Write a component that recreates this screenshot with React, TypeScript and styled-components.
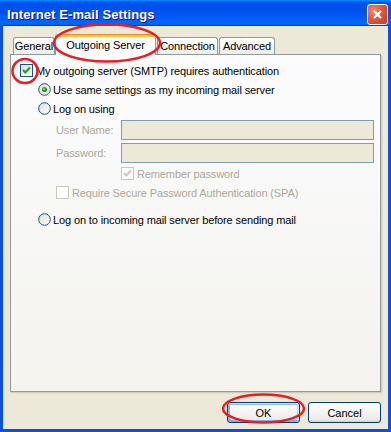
import styled, { createGlobalStyle } from "styled-components";

const GlobalStyle = createGlobalStyle`
  html, body {
    margin: 0;
    padding: 0;
    background: #ffffff;
  }
  body {
    font-family: "Liberation Sans", Arial, sans-serif;
    font-size: 11px;
  }
`;

const Window = styled.div`
  position: relative;
  width: 391px;
  height: 432px;
  display: flex;
  flex-direction: column;
  overflow: hidden;
`;

const TitleBar = styled.div`
  height: 26px;
  box-sizing: border-box;
  padding: 3px 3px 0 7px;
  display: flex;
  align-items: center;
  justify-content: space-between;
  background: linear-gradient(
    180deg,
    #0997ff,
    #0053ee 8%,
    #0050ee 40%,
    #06f 88%,
    #06f 93%,
    #005bff 95%,
    #003dd7 96%,
    #003dd7
  );
`;

const Title = styled.span`
  font-family: "Liberation Sans", Arial, sans-serif;
  font-weight: 700;
  font-size: 13px;
  color: #ffffff;
  text-shadow: 1px 1px #0f1089;
  letter-spacing: 0.1px;
`;

const CloseButton = styled.div`
  width: 21px;
  height: 21px;
  box-sizing: border-box;
  border: 1px solid #ffffff;
  border-radius: 3px;
  background: radial-gradient(
    circle at 30% 30%,
    #f08a6a 0%,
    #e2583b 45%,
    #c83a1c 100%
  );
  display: flex;
  align-items: center;
  justify-content: center;
`;

const Frame = styled.div`
  flex: 1;
  display: flex;
  flex-direction: column;
  box-sizing: border-box;
  border: 3px solid #0b4fe3;
  border-top: none;
  background: #ece9d8;
  padding: 8px 7px 6px 7px;
`;

const TabStrip = styled.div`
  height: 20px;
  display: flex;
  align-items: flex-end;
  padding-left: 3px;
  position: relative;
  z-index: 1;
`;

const Tab = styled.div<{ $w: number; $active?: boolean; $gap?: number }>`
  width: ${(p) => p.$w}px;
  margin-left: ${(p) => p.$gap ?? 0}px;
  height: ${(p) => (p.$active ? 21 : 17)}px;
  margin-bottom: ${(p) => (p.$active ? -1 : 0)}px;
  box-sizing: border-box;
  border: 1px solid #919b9c;
  border-bottom: none;
  border-top-color: ${(p) => (p.$active ? "#e68b2c" : "#919b9c")};
  border-radius: 3px 3px 0 0;
  display: flex;
  align-items: center;
  justify-content: center;
  padding-bottom: ${(p) => (p.$active ? 1 : 0)}px;
  color: #000000;
  letter-spacing: -0.1px;
  background: ${(p) =>
    p.$active
      ? "#fcfcfe"
      : "linear-gradient(180deg, #fff, #fafaf9 26%, #f0f0ea 95%, #ecebe5)"};
  box-shadow: ${(p) => (p.$active ? "inset 0 2px #ffc83c" : "none")};
`;

const Panel = styled.div`
  flex: 1;
  box-sizing: border-box;
  border: 1px solid #919b9c;
  background: linear-gradient(180deg, #fcfcfe, #f4f3ee);
  box-shadow: 1px 1px #d0cebf, 2px 2px #e3e0d0;
  padding: 6px 0 0 9px;
  display: flex;
  flex-direction: column;
`;

const Row = styled.div<{ $indent?: number; $top?: number }>`
  height: 19px;
  display: flex;
  align-items: center;
  padding-left: ${(p) => p.$indent ?? 0}px;
  margin-top: ${(p) => p.$top ?? 0}px;
`;

const Label = styled.span<{ $disabled?: boolean; $gap?: number }>`
  margin-left: ${(p) => p.$gap ?? 3}px;
  color: ${(p) => (p.$disabled ? "#aca899" : "#000000")};
  letter-spacing: -0.12px;
  white-space: nowrap;
`;

const FieldRow = styled.div<{ $top: number }>`
  display: flex;
  align-items: center;
  padding-left: 36px;
  margin-top: ${(p) => p.$top}px;
`;

const FieldLabel = styled.span`
  width: 65px;
  color: #aca899;
  letter-spacing: -0.12px;
`;

const TextBox = styled.div`
  width: 253px;
  height: 20px;
  box-sizing: border-box;
  border: 1px solid #7f9db9;
  background: #ece9d8;
`;

const BoxMark = styled.span<{ $disabled?: boolean }>`
  width: 13px;
  height: 13px;
  flex: none;
  box-sizing: border-box;
  border: 1px solid ${(p) => (p.$disabled ? "#cac8bb" : "#1c5180")};
  background: ${(p) =>
    p.$disabled ? "#ffffff" : "linear-gradient(135deg, #dcdcd7, #ffffff)"};
  display: flex;
  align-items: center;
  justify-content: center;
`;

const ButtonRow = styled.div`
  display: flex;
  justify-content: flex-end;
  gap: 8px;
  margin-top: 10px;
`;

const Button = styled.button<{ $default?: boolean }>`
  width: 73px;
  height: 21px;
  box-sizing: border-box;
  border: 1px solid #003c74;
  border-radius: 3px;
  padding: 0;
  font-family: "Liberation Sans", Arial, sans-serif;
  font-size: 11px;
  color: #000000;
  background: linear-gradient(180deg, #fff, #ecebe6 86%, #d6d0c5);
  box-shadow: ${(p) =>
    p.$default
      ? "inset -1px 1px #cee7ff, inset 1px 2px #98b8ea, inset -2px 2px #bcd4f6, inset 1px -1px #89ade4, inset 2px -2px #89ade4"
      : "none"};
`;

const Overlay = styled.svg`
  position: absolute;
  left: 0;
  top: 0;
  pointer-events: none;
  z-index: 5;
`;

function CheckBox({ checked, disabled }: { checked?: boolean; disabled?: boolean }) {
  return (
    <BoxMark $disabled={disabled}>
      {checked && (
        <svg width="11" height="11" viewBox="0 0 11 11">
          <polyline
            points="2,5 4.3,7.4 9,2.6"
            fill="none"
            stroke={disabled ? "#cac8bb" : "#21a121"}
            strokeWidth="2.2"
          />
        </svg>
      )}
    </BoxMark>
  );
}

function Radio({ checked }: { checked?: boolean }) {
  return (
    <svg width="13" height="13" viewBox="0 0 13 13" style={{ flex: "none" }}>
      <defs>
        <linearGradient id="rfill" x1="0" y1="0" x2="1" y2="1">
          <stop offset="0" stopColor="#dcdcd7" />
          <stop offset="1" stopColor="#ffffff" />
        </linearGradient>
      </defs>
      <circle cx="6.5" cy="6.5" r="5.8" fill="url(#rfill)" stroke="#1c5180" strokeWidth="1" />
      {checked && <circle cx="6.5" cy="6.5" r="2.6" fill="#21a121" />}
      {checked && <circle cx="6" cy="6" r="1" fill="#8ee08e" />}
    </svg>
  );
}

export default function App() {
  return (
    <>
      <GlobalStyle />
      <Window>
        <TitleBar>
          <Title>Internet E-mail Settings</Title>
          <CloseButton>
            <svg width="11" height="11" viewBox="0 0 11 11">
              <path d="M2 2 L9 9 M9 2 L2 9" stroke="#ffffff" strokeWidth="2.2" />
            </svg>
          </CloseButton>
        </TitleBar>
        <Frame>
          <TabStrip>
            <Tab $w={42}>General</Tab>
            <Tab $w={101} $active>
              Outgoing Server
            </Tab>
            <Tab $w={61} $gap={1}>
              Connection
            </Tab>
            <Tab $w={56} $gap={1}>
              Advanced
            </Tab>
          </TabStrip>
          <Panel>
            <Row>
              <CheckBox checked />
              <Label>My outgoing server (SMTP) requires authentication</Label>
            </Row>
            <Row $indent={18}>
              <Radio checked />
              <Label $gap={2}>Use same settings as my incoming mail server</Label>
            </Row>
            <Row $indent={18}>
              <Radio />
              <Label $gap={2}>Log on using</Label>
            </Row>
            <FieldRow $top={2}>
              <FieldLabel>User Name:</FieldLabel>
              <TextBox />
            </FieldRow>
            <FieldRow $top={3}>
              <FieldLabel>Password:</FieldLabel>
              <TextBox />
            </FieldRow>
            <Row $indent={101} $top={1}>
              <CheckBox checked disabled />
              <Label $disabled>Remember password</Label>
            </Row>
            <Row $indent={36}>
              <CheckBox disabled />
              <Label $disabled>Require Secure Password Authentication (SPA)</Label>
            </Row>
            <Row $indent={18} $top={8}>
              <Radio />
              <Label $gap={2}>Log on to incoming mail server before sending mail</Label>
            </Row>
          </Panel>
          <ButtonRow>
            <Button $default>OK</Button>
            <Button>Cancel</Button>
          </ButtonRow>
        </Frame>
        <Overlay width="391" height="432" viewBox="0 0 391 432">
          <ellipse cx="107" cy="43" rx="53" ry="18.5" fill="none" stroke="#ec1c24" strokeWidth="2.5" />
          <ellipse cx="25" cy="71" rx="12.5" ry="12" fill="none" stroke="#ec1c24" strokeWidth="2.5" />
          <ellipse cx="263.5" cy="408.5" rx="40.5" ry="14" fill="none" stroke="#ec1c24" strokeWidth="2.5" />
        </Overlay>
      </Window>
    </>
  );
}
